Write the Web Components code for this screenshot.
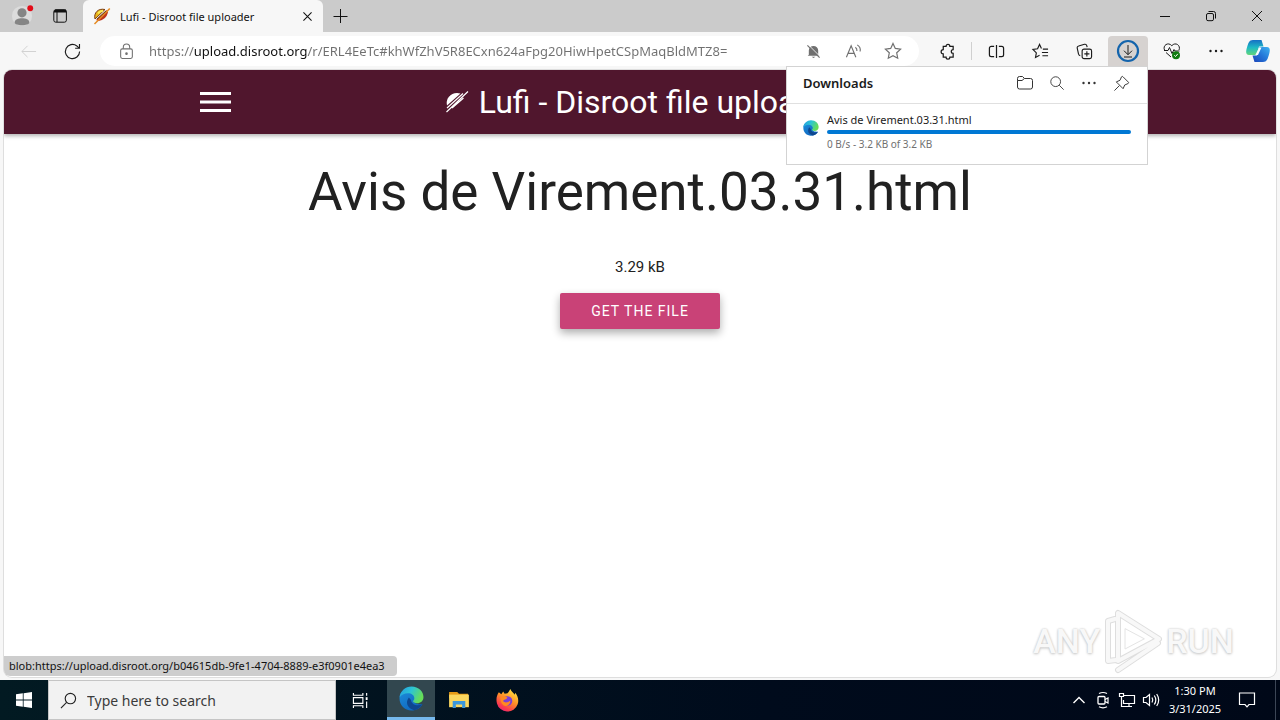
<!DOCTYPE html>
<html lang="en">
<head>
<meta charset="utf-8">
<meta name="viewport" content="width=device-width, initial-scale=1">
<title>Lufi - Disroot file uploader</title>
<style>
  html, body { margin: 0; height: 100%; }
  body {
    --ui: "Noto Sans", "Open Sans", sans-serif;
    --brand: Roboto, sans-serif;
    --line: #e0e0e0;
    --blue: #0078d4;
    font-family: var(--ui); font-size: 12px; color: #1b1b1b; overflow: hidden;
  }
</style>
</head>
<body>
<desk-top></desk-top>
<script>
const ICONS = {
  profile: ['0 0 24 24', '<g stroke="none"><circle cx="12" cy="12" r="11" fill="#dcdcdc"/><circle cx="12" cy="8.500" r="5" fill="#858585"/><path d="M4 19c0-6 16-6 16 0 0 4-16 4-16 0z" fill="#858585"/><circle cx="21" cy="3.500" r="3.200" fill="#e30b17"/></g>'],
  workspace: ['0 0 16 16', '<rect x="1.800" y="1.800" width="12.600" height="12.400" rx="2"/><path d="M2 3.600h12.400M3 2.600h11" stroke-width="2"/><path d="M5 4v10"/>'],
  close: ['0 0 16 16', '<path d="M3 3l10 10M13 3L3 13" stroke-width="1.300"/>'],
  plus: ['0 0 16 16', '<path d="M8.500 1v14M1.500 8.500h14"/>'],
  minimize: ['0 0 16 16', '<path d="M3 8.500h10"/>'],
  restore: ['0 0 16 16', '<rect x="3.500" y="5.500" width="7" height="7.200" rx="1.500"/><path d="M5.500 3.500h5a2 2 0 0 1 2 2v5"/>'],
  winclose: ['0 0 16 16', '<path d="M3 3l10 10M13 3L3 13"/>'],
  back: ['0 0 18 18', '<path d="M17 9H2M8 3L2 9l6 6"/>'],
  reload: ['0 0 18 18', '<path d="M16.500 9A7.500 7.500 0 1 1 13.600 3.100L16 5.400M16.400 1v4.600h-4.600" stroke-width="1.200"/>'],
  lock: ['0 0 16 16', '<rect x="2.500" y="5.500" width="11" height="9" rx="1.500"/><path d="M5 5.500V4a3 3 0 0 1 6 0v1.500"/><circle cx="8" cy="10" r=".7" fill="currentColor"/>'],
  bell: ['0 0 16 16', '<path d="M3 11.500V7a5 5 0 0 1 10 0v4.500l1.200 1H1.800zM6 13.500h4l-2 1.500z" fill="currentColor" stroke="none"/><path d="M2.400 .8l13 13" stroke="#fff"/><path d="M1.500 1.500l13 13" stroke-width="1.200"/>'],
  aloud: ['0 0 18 18', '<path d="M1.500 15L6.500 3l5 12M3.400 11h6.300M11 4.500q2 1.500 1.600 4M13 2q4 2.500 3 7" stroke-width="1.200"/>'],
  star: ['0 0 18 18', '<path d="M9 1.500l2.300 4.900 5.300.7-3.900 3.700 1 5.400L9 13.600l-4.700 2.600 1-5.400L1.400 7.100l5.300-.7z" stroke-width="1.200"/>'],
  puzzle: ['0 0 18 18', '<path d="M5 3.500h2.500a2 2 0 0 1 4 0H15V7a1.700 1.700 0 0 0 0 4v4h-3.500a2 2 0 0 1-4 0H4.500v-3.500a2.200 2.200 0 1 1 0-4.500V3.500z" stroke-width="1.300"/>'],
  split: ['0 0 18 18', '<path d="M6.500 3.500h-3a2 2 0 0 0-2 2v7a2 2 0 0 0 2 2h3M11.500 3.500h3a2 2 0 0 1 2 2v7a2 2 0 0 1-2 2h-3M9 2v14" stroke-width="1.300"/>'],
  favs: ['0 0 18 18', '<path d="M10 5.800L8 1.500 5.900 6.200 1 6.900l3.600 3.500-.9 5L8 13M11.500 6.500H17M10.500 10H17M11 13.500h6" stroke-width="1.200"/>'],
  collections: ['0 0 18 18', '<g stroke-width="1.200"><rect x="6.500" y="6.500" width="10" height="10" rx="2"/><path d="M11.500 8.800v5.400M8.800 11.500h5.400M4.500 13.300a2 2 0 0 1-1.800-1.500L1.300 5.500a2 2 0 0 1 1.500-2.400L9 1.400a2 2 0 0 1 2.400 1.400l.4 1.500"/></g>'],
  download: ['0 0 24 24', '<circle cx="12" cy="12" r="10" stroke="#1464ac" stroke-width="2.200"/><path d="M12 6v9.500M8 11.700l4 4 4-4"/><path d="M8 18h8"/>'],
  heart: ['0 0 18 18', '<path d="M1.500 8C-.5 3.500 5-.5 8.800 3.700 12.500-.5 18 3.500 16 8M1 8.500h4l1.500-3 2.500 6 2-4 1 1.500h4.500M3 10.500l5 4.500"/><circle cx="13" cy="13.200" r="4" fill="#107c10" stroke="none"/><path d="M11.300 13.300l1.200 1.200 2.300-2.600" stroke="#fff"/>'],
  dots: ['0 0 16 16', '<g fill="currentColor" stroke="none"><circle cx="2.500" cy="8" r="1.200"/><circle cx="8" cy="8" r="1.200"/><circle cx="13.500" cy="8" r="1.200"/></g>'],
  folder: ['0 0 18 18', '<path d="M1.500 6.500V4.500a2 2 0 0 1 2-2h3l2 2h6a2 2 0 0 1 2 2v6.500a2 2 0 0 1-2 2h-11a2 2 0 0 1-2-2zM1.500 6.500H6l2.400-2"/>'],
  search: ['0 0 18 18', '<circle cx="7.500" cy="7.500" r="5.500"/><path d="M11.500 11.500l5 5"/>'],
  pin: ['0 0 18 18', '<path d="M10.500 1.800l5.700 5.700c.6.600.3 1.200-.2 1.500l-3.600 1.600-1.700 3.900L3.500 7.300l3.900-1.700L9 2c.3-.5.9-.8 1.500-.2zM6.800 11.200L1.500 16.500"/>'],
  copilot: ['0 0 24 24', '<defs><linearGradient id="a" x1="0" y1="0" x2="0" y2="1"><stop offset="0" stop-color="#156fc5"/><stop offset=".5" stop-color="#1eb9c4"/><stop offset="1" stop-color="#61d67b"/></linearGradient><linearGradient id="b" x1="1" y1="0" x2="0" y2="1"><stop offset="0" stop-color="#3fb3f1"/><stop offset=".5" stop-color="#2477d8"/><stop offset="1" stop-color="#1c43b8"/></linearGradient></defs><path d="M7 1h8.500l2 6.500H13L10.500 16H3C-.5 16-.2 12 1 8.500 2.200 4.500 3 1 7 1z" fill="url(#a)" stroke="none"/><path d="M17 23H8.500l-2-6.500H11L13.500 8H21c3.500 0 3.200 4 2 7.500C21.800 19.500 21 23 17 23z" fill="url(#b)" stroke="none"/><path d="M13.200 8.500h2.300L12 16H9.300z" fill="#f4fbff" stroke="none"/>'],
  edge: ['0 0 24 24', '<defs><linearGradient id="g" x1="0" y1="0" x2="1" y2=".4"><stop offset="0" stop-color="#249ae0"/><stop offset=".5" stop-color="#2cc4d5"/><stop offset="1" stop-color="#66dd58"/></linearGradient><linearGradient id="h" x1="0" y1="0" x2=".6" y2="1"><stop offset="0" stop-color="#1d8edb"/><stop offset="1" stop-color="#1068c0"/></linearGradient></defs><path d="M.5 12C.5 4 6 3 12 3l4 9c-3 3-1 6 6.500 5.500C20.500 21.500 16.500 23.500 12 23.500 5.500 23.500.5 18.500.5 12z" fill="url(#h)" stroke="none"/><path d="M9.500 11c-4 5-1 10.500 5 12.200 3.500-.6 6.500-2.800 8-5.700-5 2.500-10.500.5-11-4z" fill="#0e478f" stroke="none"/><path d="M.6 11C1.300 4.800 6 .5 12 .5 19 .5 23.500 5.500 23.500 10.500c0 4-3 6-6 6-2.500 0-4-1-4-1.800 0-.7 1.200-1.200 1.200-3C14.700 9 12 7 8.600 7 5 7 1.800 8.800.6 11z" fill="url(#g)" stroke="none"/>'],
  lufi: ['0 0 18 18', '<path d="M2 12C.5 6 5 1 12 2.500z" fill="#e9b51c" stroke="#7a3a10" stroke-width="1"/><path d="M5 6.500q2-3 5-2.500" stroke="#f8ea55" stroke-width="2"/><path d="M3 13L13.500 3l1.500 2.500Q13 13 5.500 14z" fill="#c0341a" stroke="none"/><path d="M1.500 17L16.800 1.500" stroke="#e58a22" stroke-width="1.500"/><path d="M13 4L4 12" stroke="#6b4a14"/>'],
  hat: ['0 0 24 24', '<path d="M2 15.500C0 7.500 7.500 1 15.500 3.500z" fill="#fff" stroke="none"/><path d="M2 18L18 3.500M1.500 22L23 1.500M7 18L18.500 8" stroke-width="1.200"/>'],
  windows: ['0 0 16 16', '<path d="M0 2.300L6.800 1.300V7.600H0zM7.600 1.200L16 0v7.600H7.600zM0 8.400h6.800v6.300L0 13.700zM7.600 8.400H16V16l-8.400-1.200z" fill="currentColor" stroke="none"/>'],
  find: ['0 0 18 18', '<circle cx="11" cy="7" r="5.500" stroke-width="1.200"/><path d="M7 11L1 17" stroke-width="1.200"/>'],
  taskview: ['0 0 18 18', '<path d="M1.500 1v2.500h10V1M1.500 17v-2.500h10V17M1.500 6h10v6h-10zM15.500 1v3M15.500 10v7" stroke-width="1.200"/><path d="M14.500 5.500h2v3h-2z" fill="currentColor" stroke="none"/>'],
  files: ['0 0 24 20', '<path d="M1 1h9l2 2h10v5H1z" fill="#e69b16" stroke="none"/><path d="M1 4h22v14H1z" fill="#fbd75f" stroke="none"/><path d="M5 11h14v8h-3.500v-4h-7v4H5z" fill="#3b97dc" stroke="none"/>'],
  firefox: ['0 0 24 24', '<defs><linearGradient id="f" x1=".8" y1="0" x2=".2" y2="1"><stop offset="0" stop-color="#ffe843"/><stop offset=".45" stop-color="#ff9126"/><stop offset=".8" stop-color="#fb3a4e"/><stop offset="1" stop-color="#e5227e"/></linearGradient></defs><path d="M3 3.500l2.500 2 2-3L9 5l3-.5C13 3 14 2 15 0c1 3 3 3.500 4.500 6L20 4c3 3.500 4 8 2.600 12A11.300 11.300 0 0 1 1 15C-.2 10.500.8 6.500 3 3.500z" fill="url(#f)" stroke="none"/><circle cx="12" cy="12.500" r="5" fill="#7a3fd8" stroke="none"/><path d="M5 8c3-1 5 0 7 1-1 2-4 1.500-4.500 3.500C9 15 13 14 15 12c0 4-3 6.500-6 5.500C6 16.500 4 12 5 8z" fill="#ff8a20" stroke="none"/>'],
  caret: ['0 0 16 16', '<path d="M2.500 11L8 5.500l5.500 5.500" stroke-width="1.400"/>'],
  meet: ['0 0 18 18', '<rect x="4" y="5.500" width="7" height="7.500" rx="1" stroke-width="1.300"/><path d="M11 8.500l3-1.500v5l-3-1.500M5 2.500q4-2 8 0M5 15.800q4 2 8 0" stroke-width="1.200"/>'],
  network: ['0 0 18 18', '<path d="M6 4.500h10.500v8H5.500V9M8 15.500h6M11 12.500v3M1.500 2.500h4v3h-4zM3.500 6v9.500H8" stroke-width="1.200"/>'],
  volume: ['0 0 18 18', '<path d="M1.500 6.500H4l3.500-3v11L4 11.500H1.500zM10 6.500q1.500 2.500 0 5M12.300 4.500q3 4.500 0 9M14.700 3q4 6 0 12" stroke-width="1.200"/>'],
  notify: ['0 0 18 18', '<path d="M1.500 2h15v11.500H11L9 15.800l-2-2.300H1.500z" stroke-width="1.200"/>'],
  menu: ['0 0 32 20', '<path d="M0 1.500h31M0 10h31M0 18.500h31" stroke-width="3"/>'],
  play: ['0 0 56 64', '<g stroke-linejoin="round" stroke-linecap="round"><path d="M11 51L3 52V12l7-2M13 4v48l41-22zM13 61L53 34" stroke="#dedede" stroke-width="6"/><path d="M11 51L3 52V12l7-2M13 4v48l41-22zM13 61L53 34" stroke="#f8f8f8" stroke-width="4"/><path d="M20 20v20l19-10z" stroke="#e4e4e4"/></g>']
};

function define(name, html, setup) {
  const template = document.createElement('template');
  template.innerHTML = html;
  customElements.define(name, class extends HTMLElement {
    constructor() {
      super();
      this.attachShadow({ mode: 'open' }).append(template.content.cloneNode(true));
    }
    connectedCallback() { if (setup) setup(this, this.shadowRoot); }
  });
}

/* <ui-icon name size>: one glyph from ICONS */
define('ui-icon', `<style>
  :host { display: block; flex: none; }
  svg { display: block; fill: none; stroke: currentColor; overflow: visible; }
</style><div></div>`, (el, root) => {
  const [box, body] = ICONS[el.getAttribute('name')];
  const size = Number(el.getAttribute('size') || 18);
  const [, , w, h] = box.split(' ').map(Number);
  root.querySelector('div').innerHTML =
    `<svg width="${size}" height="${Math.round(size * h / w)}" viewBox="${box}" aria-hidden="true">${body}</svg>`;
});

/* <icon-button icon label size>: width and colours come from the host */
define('icon-button', `<style>
  :host { display: flex; flex: none; width: 40px; }
  button { flex: 1; display: flex; align-items: center; justify-content: center; border: 0; padding: 0;
    background: none; color: inherit; font: inherit; cursor: pointer; }
</style><button type="button"></button>`, (el, root) => {
  const button = root.querySelector('button');
  button.setAttribute('aria-label', el.getAttribute('label'));
  const icon = document.createElement('ui-icon');
  icon.setAttribute('name', el.getAttribute('icon'));
  icon.setAttribute('size', el.getAttribute('size') || 18);
  button.replaceChildren(icon);
});

define('tab-strip', `<style>
  :host { display: flex; height: 32px; flex: none; background: #cbcbcb; color: #111; }
  .left { display: flex; padding-left: 3px; box-sizing: border-box; width: 83px; }
  .left icon-button { width: 38px; }
  .tab { display: flex; align-items: center; width: 240px; box-sizing: border-box; padding: 0 8px 0 10px; gap: 9px;
    background: #f7f7f7; border-radius: 6px 6px 0 0; font-size: 11px; white-space: nowrap; }
  .tab span { flex: 1; }
  .tab icon-button { width: 16px; }
  .new { width: 34px; }
  .win { display: flex; margin-left: auto; }
  .win icon-button { width: 46px; }
</style>
<div class="left"><icon-button icon="profile" label="Profile" size="22"></icon-button><icon-button icon="workspace" label="Workspaces" size="16"></icon-button></div>
<div class="tab"><ui-icon name="lufi" size="18"></ui-icon><span>Lufi - Disroot file uploader</span><icon-button icon="close" label="Close tab" size="13"></icon-button></div>
<icon-button class="new" icon="plus" label="New tab" size="16"></icon-button>
<div class="win"><icon-button icon="minimize" label="Minimize" size="16"></icon-button><icon-button icon="restore" label="Restore" size="16"></icon-button><icon-button icon="winclose" label="Close" size="16"></icon-button></div>`);

define('address-bar', `<style>
  :host { display: flex; flex: 1; min-width: 0; align-items: center; height: 30px; border-radius: 15px; background: #fff;
    color: #707070; padding: 0 6px 0 18px; box-sizing: border-box; }
  input { flex: 1; min-width: 0; margin-left: 14px; border: 0; outline: 0; padding: 0; height: 24px;
    font: 13px var(--ui); color: transparent; -webkit-background-clip: text; background-clip: text;
    background-image: linear-gradient(90deg, #707070 45px, #111 45px, #111 158px, #707070 158px); }
  icon-button { height: 30px; }
</style>
<ui-icon name="lock" size="17"></ui-icon>
<input type="text" aria-label="Address" spellcheck="false" value="https://upload.disroot.org/r/ERL4EeTc#khWfZhV5R8ECxn624aFpg20HiwHpetCSpMaqBldMTZ8=">
<icon-button icon="bell" label="Notifications blocked" size="15"></icon-button>
<icon-button icon="aloud" label="Read aloud" size="17"></icon-button>
<icon-button icon="star" label="Add to favorites" size="18"></icon-button>`);

define('tool-bar', `<style>
  :host { display: flex; flex: none; height: 38px; align-items: center; gap: 4px; padding: 0 4px 0 8px; background: #f7f7f7; color: #1b1b1b; box-sizing: border-box; }
  icon-button { height: 30px; }
  .off { color: #cfcfcf; }
  address-bar { margin: 0 4px; }
  hr { width: 1px; height: 18px; border: 0; margin: 0; background: #d0d0d0; }
  .on { background: #d6d2d0; border-radius: 4px 4px 0 0; }
  .last { width: 36px; }
</style>
<icon-button class="off" icon="back" label="Back" size="17"></icon-button>
<icon-button icon="reload" label="Refresh" size="17"></icon-button>
<address-bar></address-bar>
<icon-button icon="puzzle" label="Extensions" size="17"></icon-button><hr>
<icon-button icon="split" label="Split screen" size="17"></icon-button>
<icon-button icon="favs" label="Favorites" size="17"></icon-button>
<icon-button icon="collections" label="Collections" size="17"></icon-button>
<icon-button class="on" icon="download" label="Downloads" size="24"></icon-button>
<icon-button icon="heart" label="Browser essentials" size="18"></icon-button>
<icon-button icon="dots" label="Settings and more" size="16"></icon-button>
<icon-button class="last" icon="copilot" label="Copilot" size="24"></icon-button>`);

define('downloads-panel', `<style>
  :host { display: block; width: 362px; box-sizing: border-box; background: #fff; border: 1px solid #d3d3d3; }
  header { display: flex; align-items: center; height: 37px; padding: 0 10px 4px 16px; box-sizing: border-box; border-bottom: 1px solid var(--line); }
  h2 { flex: 1; margin: 0; font-size: 13px; font-weight: 600; }
  header icon-button { width: 32px; height: 30px; color: #333; }
  .item { display: flex; align-items: flex-start; gap: 8px; padding: 8px 16px; height: 60px; box-sizing: border-box; }
  .item ui-icon { margin-top: 8px; }
  .info { flex: 1; display: grid; gap: 2px; }
  .info label { font-size: 11px; line-height: 16px; }
  progress { display: block; width: 100%; height: 4px; appearance: none; border: 0; border-radius: 2px; overflow: hidden; background: #ddd; }
  progress::-webkit-progress-bar { background: #ddd; }
  progress::-webkit-progress-value { background: var(--blue); }
  small { font-size: 10px; line-height: 16px; color: #707070; }
</style>
<header><h2>Downloads</h2>
<icon-button icon="folder" label="Open downloads folder" size="18"></icon-button>
<icon-button icon="search" label="Search downloads" size="16"></icon-button>
<icon-button icon="dots" label="More options" size="16"></icon-button>
<icon-button icon="pin" label="Pin downloads" size="17"></icon-button></header>
<div class="item"><ui-icon name="edge" size="16"></ui-icon>
<div class="info"><label for="bar">Avis de Virement.03.31.html</label><progress id="bar" value="1" max="1"></progress><small>0 B/s - 3.2 KB of 3.2 KB</small></div></div>`);

define('lufi-page', `<style>
  :host { display: block; flex: 1; min-height: 0; margin: 0 4px 3px; border-radius: 8px; overflow: hidden; background: #fff;
    font-family: var(--brand); color: #212121; box-shadow: 0 0 0 1px #dedede; }
  nav { display: grid; grid-template-columns: 1fr auto 1fr; align-items: center; height: 64px; padding: 0 15%;
    background: #50162d; color: #fff; box-shadow: 0 2px 4px rgba(0,0,0,.3); }
  nav icon-button { height: 40px; width: 42px; }
  a { display: flex; align-items: center; gap: 10px; padding-left: 6px; color: inherit; text-decoration: none; font-size: 32px; line-height: 64px; white-space: nowrap; }
  main { display: flex; flex-direction: column; align-items: center; }
  h1 { margin: 23px 0 29px; font-size: 53px; line-height: 70px; font-weight: 400; text-align: center; }
  p { margin: 0; font-size: 15px; line-height: 22px; }
  main button { margin-top: 15px; width: 160px; height: 36px; border: 0; border-radius: 2px; background: #c94277; color: #fff;
    font: 14px var(--brand); letter-spacing: 1px; text-transform: uppercase; box-shadow: 0 4px 8px rgba(0,0,0,.32); cursor: pointer; }
</style>
<nav><icon-button icon="menu" label="Menu" size="32"></icon-button><a href="#"><ui-icon name="hat" size="24"></ui-icon>Lufi - Disroot file uploader</a></nav>
<main><h1>Avis de Virement.03.31.html</h1><p>3.29 kB</p><button type="button">Get the file</button></main>`);

define('water-mark', `<style>
  :host { display: flex; align-items: center; gap: 5px; font: 500 34px/64px Roboto, sans-serif; color: #f8f8f8;
    text-shadow: 0 0 2px #c4c4c4, 0 1px 3px #ccc; pointer-events: none; }
</style><span>ANY</span><ui-icon name="play" size="56"></ui-icon><span>RUN</span>`);

define('task-bar', `<style>
  :host { display: flex; flex: none; height: 40px; background: linear-gradient(90deg, #021a22, #000b1c 60%, #000818); color: #fff; }
  .start, .app { width: 48px; }
  label { display: flex; align-items: center; gap: 10px; width: 288px; box-sizing: border-box; padding: 0 11px; background: #f2f2f2; border: 1px solid #c5c5c5; color: #222; }
  input { flex: 1; min-width: 0; border: 0; outline: 0; padding: 0; background: none; font: 14px var(--ui); color: inherit; }
  input::placeholder { color: #3b3b3b; opacity: 1; }
  .open { margin-left: 3px; background: #32474f; border-bottom: 3px solid #76b9ed; height: 37px; }
  .tray { display: flex; margin-left: auto; padding-right: 8px; border-right: 1px solid #3c4656; margin-right: 4px; }
  .tray icon-button { width: 24px; }
  .tray icon-button.bell { width: 40px; }
  time { display: grid; align-content: center; width: 64px; text-align: center; font-size: 11px; line-height: 18px; }
</style>
<icon-button class="start" icon="windows" label="Start" size="16"></icon-button>
<label><ui-icon name="find" size="17"></ui-icon><input type="search" placeholder="Type here to search" aria-label="Search"></label>
<icon-button class="app" icon="taskview" label="Task view" size="17"></icon-button>
<icon-button class="app open" icon="edge" label="Microsoft Edge" size="25"></icon-button>
<icon-button class="app" icon="files" label="File Explorer" size="22"></icon-button>
<icon-button class="app" icon="firefox" label="Firefox" size="23"></icon-button>
<div class="tray">
<icon-button icon="caret" label="Show hidden icons" size="16"></icon-button>
<icon-button icon="meet" label="Meet now" size="18"></icon-button>
<icon-button icon="network" label="Network" size="18"></icon-button>
<icon-button icon="volume" label="Volume" size="18"></icon-button>
<time datetime="2025-03-31T13:30"><span>1:30 PM</span><span>3/31/2025</span></time>
<icon-button class="bell" icon="notify" label="Notifications" size="18"></icon-button></div>`);

define('desk-top', `<style>
  :host { display: flex; flex-direction: column; height: 100vh; background: #f7f7f7; }
  .view { position: relative; flex: 1; min-height: 0; display: flex; flex-direction: column; }
  downloads-panel { position: absolute; top: -4px; right: 132px; }
  water-mark { position: absolute; right: 46px; bottom: 7px; }
  .status { position: absolute; left: 4px; bottom: 4px; padding: 0 12px 0 5px; border-radius: 0 4px 4px 6px; background: #cdcdcd; color: #111; font-size: 11px; line-height: 20px; }
</style>
<tab-strip></tab-strip><tool-bar></tool-bar>
<div class="view"><lufi-page></lufi-page><downloads-panel></downloads-panel><water-mark></water-mark>
<div class="status" role="status">blob:https://upload.disroot.org/b04615db-9fe1-4704-8889-e3f0901e4ea3</div></div>
<task-bar></task-bar>`);
</script>
</body>
</html>
